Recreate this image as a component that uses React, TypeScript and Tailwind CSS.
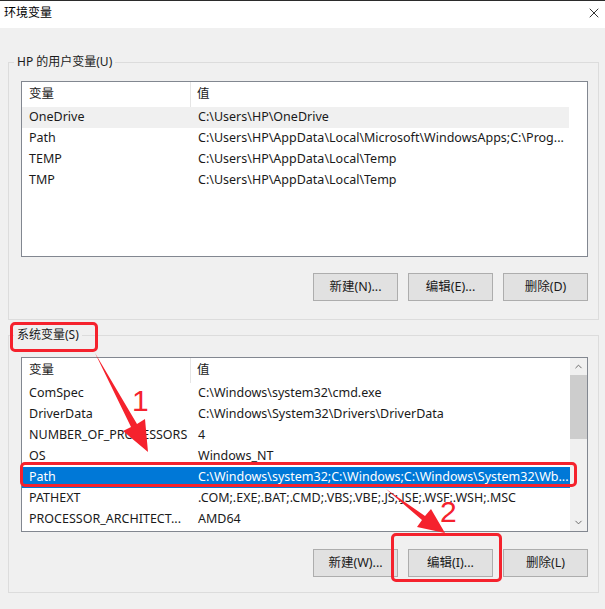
import { X, ChevronUp, ChevronDown } from "lucide-react";

const userVars = [
    { name: "OneDrive", value: "C:\\Users\\HP\\OneDrive" },
    { name: "Path", value: "C:\\Users\\HP\\AppData\\Local\\Microsoft\\WindowsApps;C:\\Prog..." },
    { name: "TEMP", value: "C:\\Users\\HP\\AppData\\Local\\Temp" },
    { name: "TMP", value: "C:\\Users\\HP\\AppData\\Local\\Temp" },
];

const sysVars = [
    { name: "ComSpec", value: "C:\\Windows\\system32\\cmd.exe" },
    { name: "DriverData", value: "C:\\Windows\\System32\\Drivers\\DriverData" },
    { name: "NUMBER_OF_PROCESSORS", value: "4" },
    { name: "OS", value: "Windows_NT" },
    { name: "Path", value: "C:\\Windows\\system32;C:\\Windows;C:\\Windows\\System32\\Wb..." },
    { name: "PATHEXT", value: ".COM;.EXE;.BAT;.CMD;.VBS;.VBE;.JS;.JSE;.WSF;.WSH;.MSC" },
    { name: "PROCESSOR_ARCHITECT...", value: "AMD64" },
];

const font = "font-['Segoe_UI','Noto_Sans','Noto_Sans_CJK_SC',sans-serif]";

function Header() {
    return (
        <div className="flex h-[25px] items-center text-[#1a1a1a]">
            <div className="flex h-full w-[169px] shrink-0 items-center border-r border-[#e5e5e5] pl-[7px]">变量</div>
            <div className="pl-[6px]">值</div>
        </div>
    );
}

function Row({ name, value, mode }: { name: string; value: string; mode?: "gray" | "blue" }) {
    const bg = mode === "gray" ? "bg-[#f0f0f0] text-[#1a1a1a]" : mode === "blue" ? "bg-[#0078d7] text-white" : "text-[#1a1a1a]";
    return (
        <div className={`flex h-[21px] items-center whitespace-nowrap ${bg}`}>
            <div className="w-[169px] shrink-0 overflow-hidden pl-[7px]">{name}</div>
            <div className="pl-[7px]">{value}</div>
        </div>
    );
}

function Buttons({ labels, top }: { labels: string[]; top: string }) {
    return (
        <div className={`${top} flex justify-end gap-[10px]`}>
            {labels.map((l) => (
                <button
                    key={l}
                    className="h-[28px] w-[85px] border border-[#adadad] bg-[#e1e1e1] text-[12.5px] text-[#1a1a1a]"
                >
                    {l}
                </button>
            ))}
        </div>
    );
}

export default function App() {
    return (
        <div className={`relative h-[609px] w-[605px] overflow-hidden bg-[#f0f0f0] text-[12.5px] ${font}`}>

            {/* Title bar */}

            <div className="flex h-[28px] items-center justify-between border-t border-[#2b2b2b] bg-white pb-[3px] pl-[4px] pr-[3px]">
                <span className="text-[12px] text-black">环境变量</span>
                <X size={16} strokeWidth={1.2} className="text-black" />
            </div>

            {/* User variables */}

            <fieldset className="ml-[8px] mr-[6px] mt-[25px] min-w-0 border border-[#dcdcdc] pb-[18px] pl-[12px] pr-[10px]">
                <legend className="-ml-[7px] px-[3px] text-[12px] leading-[18px] text-[#1a1a1a]">HP 的用户变量(U)</legend>
                <div className="mt-[10px] h-[176px] overflow-hidden border border-[#828790] bg-white pr-[18px]">
                    <Header />
                    {userVars.map((v, i) => (
                        <Row key={v.name} name={v.name} value={v.value} mode={i === 0 ? "gray" : undefined} />
                    ))}
                </div>
                <Buttons top="mt-[16px]" labels={["新建(N)...", "编辑(E)...", "删除(D)"]} />
            </fieldset>

            {/* System variables */}

            <fieldset className="ml-[8px] mr-[6px] mt-[6px] min-w-0 border border-[#dcdcdc] pb-[15px] pl-[12px] pr-[10px]">
                <legend className="-ml-[7px] px-[3px] text-[12px] leading-[18px] text-[#1a1a1a]">系统变量(S)</legend>
                <div className="mt-[13px] flex h-[175px] border border-[#828790] bg-white">
                    <div className="min-w-0 flex-1 overflow-hidden">
                        <Header />
                        {sysVars.map((v) => (
                            <Row key={v.name} name={v.name} value={v.value} mode={v.name === "Path" ? "blue" : undefined} />
                        ))}
                    </div>
                    <div className="flex w-[17px] flex-col bg-[#f0f0f0]">
                        <div className="flex h-[17px] items-center justify-center text-[#606060]">
                            <ChevronUp size={11} strokeWidth={2} />
                        </div>
                        <div className="h-[64px] bg-[#cdcdcd]" />
                        <div className="flex-1" />
                        <div className="flex h-[17px] items-center justify-center text-[#606060]">
                            <ChevronDown size={11} strokeWidth={2} />
                        </div>
                    </div>
                </div>
                <Buttons top="mt-[17px]" labels={["新建(W)...", "编辑(I)...", "删除(L)"]} />
            </fieldset>

            {/* Red annotations */}

            <div className="absolute left-[10px] top-[322px] h-[30px] w-[88px] rounded-[5px] border-[3px] border-[#f5222d]" />
            <div className="absolute left-[20px] top-[462px] h-[25px] w-[557px] rounded-[5px] border-[3px] border-[#f5222d]" />
            <div className="absolute left-[391px] top-[533px] h-[49px] w-[111px] rounded-[5px] border-[3px] border-[#f5222d]" />

            <svg className="absolute left-0 top-0" width="605" height="609" viewBox="0 0 605 609">
                <polygon
                    points="95,353 137,424 145,419 148,452 123,431 131,427"
                    fill="#f5222d"
                />
                <polygon
                    points="386,489 425,516 431,509 445,533 417,527 422,520"
                    fill="#f5222d"
                />
            </svg>

            <span className="absolute left-[132px] top-[386px] text-[30px] leading-none text-[#f5222d] font-['Liberation_Sans',sans-serif]">1</span>
            <span className="absolute left-[440px] top-[497px] text-[30px] leading-none text-[#f5222d] font-['Liberation_Sans',sans-serif]">2</span>
        </div>
    );
}
